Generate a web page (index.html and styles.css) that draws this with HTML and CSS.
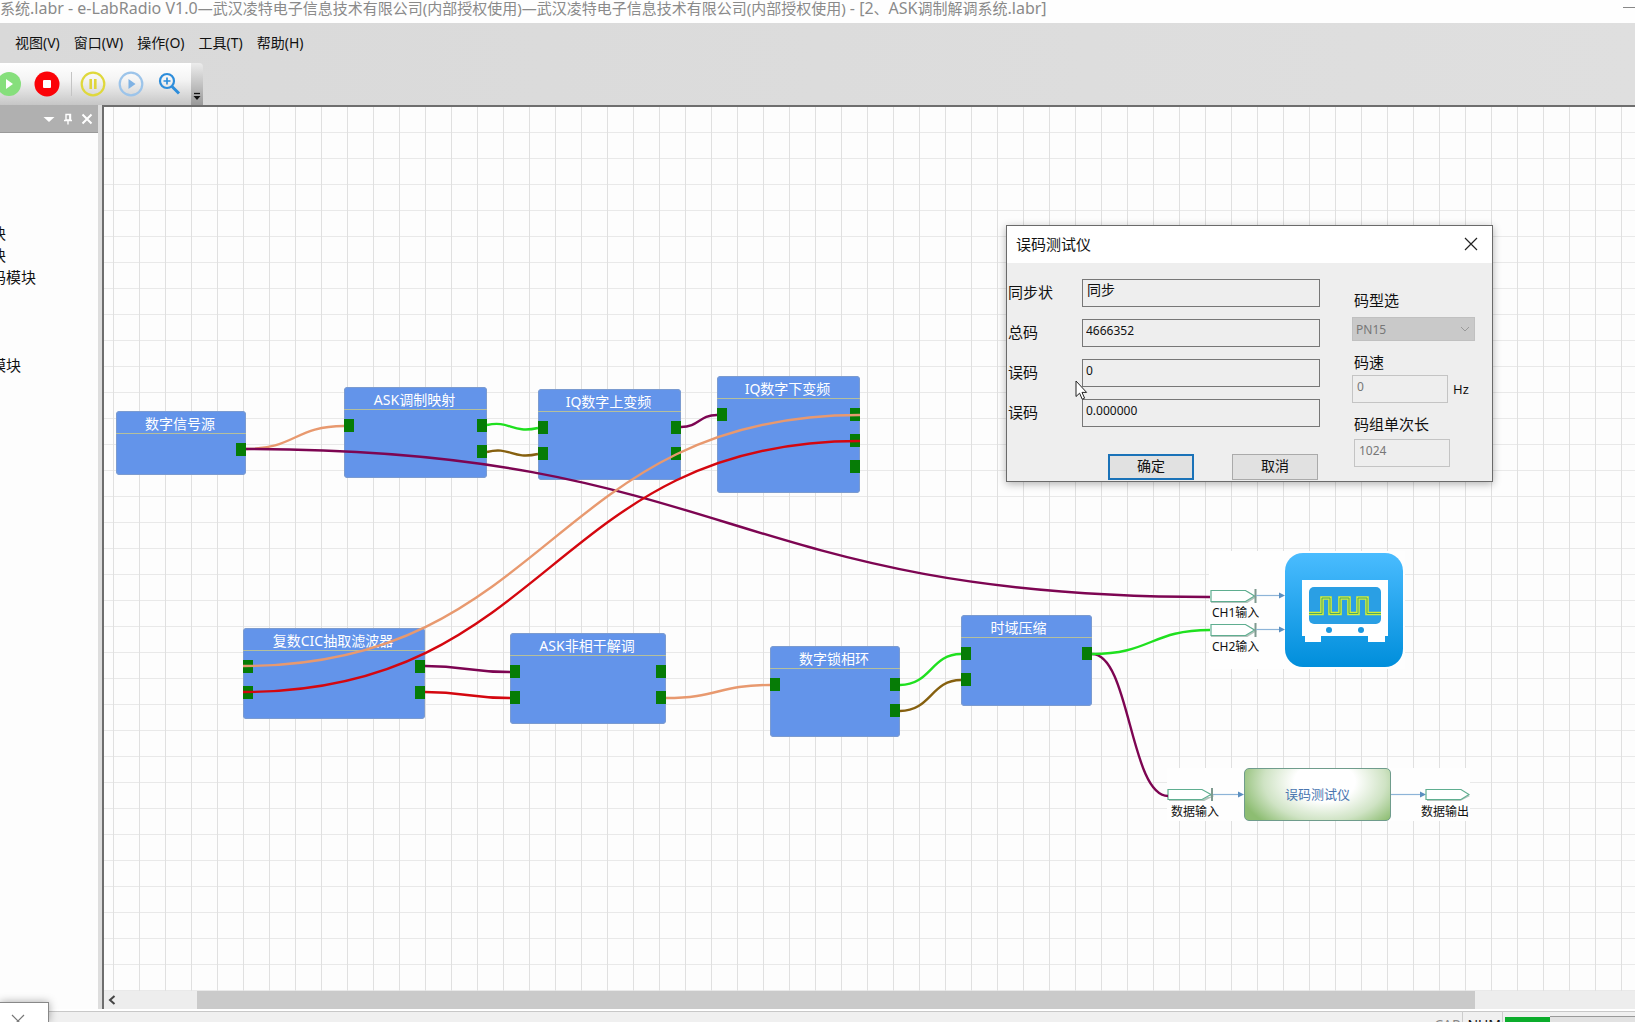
FILE: index.html
```html
<!DOCTYPE html>
<html lang="zh-CN">
<head>
<meta charset="utf-8">
<title>e-LabRadio V1.0</title>
<link rel="stylesheet" href="styles.css">
</head>
<body>
<div class="app">
  <header class="titlebar">
    <span class="titlebar-text">系统<b>.labr - e-LabRadio V1.0</b>—武汉凌特电子信息技术有限公司(内部授权使用)—武汉凌特电子信息技术有限公司(内部授权使用)<b> - [2</b>、<b>ASK</b>调制解调系统<b>.labr]</b></span>
    <button class="minimize" type="button" aria-label="最小化"></button>
  </header>

  <div class="ribbon">
    <nav class="menubar">
      <button type="button">视图(V)</button>
      <button type="button">窗口(W)</button>
      <button type="button">操作(O)</button>
      <button type="button">工具(T)</button>
      <button type="button">帮助(H)</button>
    </nav>
    <div class="toolbar">
      <div class="tools">
        <button type="button" aria-label="运行"><svg viewBox="0 0 26 26"><circle cx="13" cy="13" r="12" fill="#86df7c"/><path d="M10 8v10l7-5z" fill="#fff"/></svg></button>
        <button type="button" aria-label="停止"><svg viewBox="0 0 26 26"><circle cx="13" cy="13" r="12.5" fill="#fb0207"/><rect x="9" y="9" width="8" height="8" rx="1" fill="#fff"/></svg></button>
        <span class="tool-sep"></span>
        <button type="button" aria-label="暂停"><svg viewBox="0 0 26 26"><circle cx="13" cy="13" r="11.3" fill="none" stroke="#dfd83c" stroke-width="2.2"/><path d="M10.7 8v10M15.3 8v10" stroke="#e0d53c" stroke-width="2.6"/></svg></button>
        <button type="button" aria-label="单步"><svg viewBox="0 0 26 26"><circle cx="13" cy="13" r="11.3" fill="none" stroke="#9cc4ea" stroke-width="2.2"/><path d="M10.5 8v10l7-5z" fill="#7fb2e4"/></svg></button>
        <button type="button" aria-label="放大"><svg viewBox="0 0 26 26" fill="none" stroke="#2d8ddb"><circle cx="11" cy="10" r="7" stroke-width="2.2"/><path d="M11 6.500v7M7.500 10h7" stroke-width="1.700"/><path d="M16 15.500l7 7" stroke-width="3"/></svg></button>
      </div>
      <button class="overflow" type="button" aria-label="更多"><svg viewBox="0 0 8 9"><path d="M1 1.500h6" stroke="#111" stroke-width="1.300"/><path d="M0.500 4h7L4 8z" fill="#111"/></svg></button>
    </div>
  </div>

  <main class="workspace">
    <aside class="sidebar">
      <div class="panel-head">
        <button type="button" aria-label="菜单"><svg viewBox="0 0 12 12"><path d="M0.500 4h11L6 9z" fill="#fff"/></svg></button>
        <button type="button" aria-label="固定"><svg viewBox="0 0 12 12" fill="none" stroke="#fff" stroke-width="1.400"><path d="M4 1.500h4.500V7H4zM2 7.500h8M6 7.500v4M7.800 2v5"/></svg></button>
        <button type="button" aria-label="关闭"><svg viewBox="0 0 12 12"><path d="M1.500 1.500l9 9M10.500 1.500l-9 9" stroke="#fff" stroke-width="2"/></svg></button>
      </div>
      <ul class="tree">
        <li>块</li>
        <li>块</li>
        <li>码模块</li>
        <li class="tree-later">模块</li>
      </ul>
    </aside>

    <div class="stage">
      <section class="canvas">
        <article class="node n-source"><h2>数字信号源</h2><div class="ports"><div></div><div><i></i></div></div></article>
        <article class="node n-map"><h2>ASK调制映射</h2><div class="ports"><div><i></i></div><div><i></i><i></i></div></div></article>
        <article class="node n-up"><h2>IQ数字上变频</h2><div class="ports"><div><i></i><i></i></div><div><i></i><i></i></div></div></article>
        <article class="node n-down"><h2>IQ数字下变频</h2><div class="ports"><div><i></i></div><div><i></i><i></i><i></i></div></div></article>
        <article class="node n-cic"><h2>复数CIC抽取滤波器</h2><div class="ports"><div><i></i><i></i></div><div><i></i><i></i></div></div></article>
        <article class="node n-demod"><h2>ASK非相干解调</h2><div class="ports"><div><i></i><i></i></div><div><i></i><i></i></div></div></article>
        <article class="node n-pll"><h2>数字锁相环</h2><div class="ports"><div><i></i></div><div><i></i><i></i></div></div></article>
        <article class="node n-time"><h2>时域压缩</h2><div class="ports"><div><i></i><i></i></div><div><i></i></div></div></article>

        <div class="scope">
          <svg width="196" height="118" viewBox="1209 551 196 118">
            <defs>
              <linearGradient id="sky" x1="0" y1="0" x2="0" y2="1"><stop offset="0" stop-color="#4abcff"/><stop offset="1" stop-color="#008edb"/></linearGradient>
            </defs>
            <g stroke-width="1.200">
              <g id="tag1"><path d="M1212 592h35l8 5-8 5h-35z" fill="none" stroke="#b4c4bd" stroke-width="2"/><path d="M1211 590.500h34.500l9 5.500-9 5.500H1211z" fill="#fff" stroke="#5fae90"/><path d="M1255.500 589v14" stroke="#7f9a90" stroke-width="2"/><path d="M1256 595.500h24" stroke="#8db4d8"/><path d="M1279 592.500v6l6-3z" fill="#5b8fc0"/></g>
              <use href="#tag1" y="34"/>
            </g>
            <rect x="1285" y="553" width="118" height="114" rx="18" fill="url(#sky)"/>
            <path d="M1302 580h86v56h-3v6h-17v-6h-47v6h-16v-6h-3z" fill="#fff"/>
            <rect x="1309" y="587" width="72" height="37" rx="5" fill="#2a9fe4"/>
            <circle cx="1329" cy="630" r="3" fill="#1c97df"/><circle cx="1361" cy="630" r="3" fill="#1c97df"/>
            <g fill="none">
              <path d="M1309 613.500h13v-15.500h8v15.500h10v-15.500h9v15.500h9v-15.500h9v15.500h14" stroke="#d2ee38" stroke-width="3.600"/>
              <path d="M1309 613.500h13v-15.500h8v15.500h10v-15.500h9v15.500h9v-15.500h9v15.500h14" stroke="#4aa869"/>
            </g>
          </svg>
          <span class="pin-label ch1">CH1输入</span>
          <span class="pin-label ch2">CH2输入</span>
        </div>

        <div class="tester">
          <div class="pin">
            <svg width="77" height="18" viewBox="0 0 77 18"><path d="M3 7h34l8 4-8 4H3z" fill="none" stroke="#b4c4bd" stroke-width="2"/><path d="M1 4.500h34l9 5-9 5H1z" fill="#fff" stroke="#5fae90" stroke-width="1.200"/><path d="M45 3v13" stroke="#7f9a90" stroke-width="2"/><path d="M46 9.500h26" stroke="#8db4d8" stroke-width="1.200"/><path d="M71 6.500v6l6-3z" fill="#5b8fc0"/></svg>
            <span>数据输入</span>
          </div>
          <div class="tester-box">误码测试仪</div>
          <div class="pin out">
            <svg width="79" height="18" viewBox="0 0 79 18"><path d="M0 9.500h30" stroke="#8db4d8" stroke-width="1.200"/><path d="M29 6.500v6l6-3z" fill="#5b8fc0"/><path d="M37 7h32l8 4-8 4H37z" fill="none" stroke="#b4c4bd" stroke-width="2"/><path d="M35 4.500h35l8 5-8 5H35z" fill="#fff" stroke="#5fae90" stroke-width="1.200"/></svg>
            <span>数据输出</span>
          </div>
        </div>

        <svg class="wires" width="1531" height="884" viewBox="104 107 1531 884" fill="none" stroke-width="2.400">
          <path stroke="#e8996f" d="M246 449C295 449 295 426 344 426"/>
          <path stroke="#7d0552" d="M246 449C728 449 728 597 1210 597"/>
          <path stroke="#1fe01f" d="M487 425C510 420 512 434 538 428"/>
          <path stroke="#86600f" d="M487 452C510 446 512 460 538 454"/>
          <path stroke="#7d0552" d="M681 427C699 427 699 415 717 415"/>
          <path stroke="#e8996f" d="M860 415C551 415 551 666 243 666"/>
          <path stroke="#d4070f" d="M860 441C551 441 551 692 243 692"/>
          <path stroke="#7d0552" d="M425 666C467 666 467 672 510 672"/>
          <path stroke="#d4070f" d="M425 692C467 692 467 698 510 698"/>
          <path stroke="#e8996f" d="M666 698C718 698 718 685 770 685"/>
          <path stroke="#1fe01f" d="M900 685C931 685 931 654 961 654"/>
          <path stroke="#86600f" d="M900 711C931 711 931 680 961 680"/>
          <path stroke="#7d0552" d="M1092 654C1130 654 1130 796 1168 796"/>
          <path stroke="#1fe01f" d="M1092 654C1151 654 1151 630 1210 630"/>
        </svg>

        <form class="dialog" role="dialog" aria-labelledby="dlg-title">
          <div class="dialog-head">
            <span id="dlg-title">误码测试仪</span>
            <button type="button" aria-label="关闭"><svg viewBox="0 0 14 14"><path d="M1 1l12 12M13 1L1 13" stroke="#222" stroke-width="1.200"/></svg></button>
          </div>
          <div class="dialog-body">
            <div class="left">
              <div class="row"><label for="sync">同步状</label><input class="cjk" id="sync" value="同步" readonly></div>
              <div class="row"><label for="total">总码</label><input id="total" value="4666352" readonly></div>
              <div class="row"><label for="err">误码</label><input id="err" value="0" readonly></div>
              <div class="row"><label for="rate">误码</label><input id="rate" value="0.000000" readonly></div>
              <div class="actions"><button class="ok" type="button">确定</button><button type="button">取消</button></div>
            </div>
            <div class="right">
              <label for="type">码型选</label>
              <div class="select-wrap"><select id="type" disabled><option>PN15</option></select><svg viewBox="0 0 10 6"><path d="M1 1l4 4 4-4" fill="none" stroke="#999"/></svg></div>
              <label for="speed">码速</label>
              <div class="speed"><input id="speed" value="0" disabled><span>Hz</span></div>
              <label class="len" for="len">码组单次长</label>
              <input id="len" value="1024" disabled>
            </div>
          </div>
        </form>
        <svg class="cursor" width="14" height="20" viewBox="0 0 14 20"><path d="M1 1v15.500l3.600-3.300 2.600 6 2.400-1-2.600-5.800h4.600z" fill="#fff" stroke="#222"/></svg>
      </section>
      <div class="hscroll">
        <button type="button" aria-label="向左"><svg viewBox="0 0 8 10"><path d="M6.500 1L2 5l4.500 4" fill="none" stroke="#444" stroke-width="2"/></svg></button>
        <div class="thumb"></div>
      </div>
    </div>
  </main>

  <footer class="statusbar">
    <span class="cap">CAP</span><span class="num">NUM</span><span class="progress"></span><span class="rest"></span>
  </footer>
  <div class="popup"><svg viewBox="0 0 14 14"><path d="M1 1l12 12M13 1L1 13" stroke="#777" stroke-width="1.200"/></svg></div>
</div>
</body>
</html>
```
FILE: styles.css
```css
* { box-sizing: border-box; }

body {
  margin: 0;
  font: 14px/20px "Noto Sans", "Noto Sans CJK SC", sans-serif;
  color: #111;
}

button, input, select { font: inherit; color: inherit; margin: 0; padding: 0; border: 0; border-radius: 0; }
button { background: none; }
svg { display: block; }

.app {
  position: relative;
  display: flex;
  flex-direction: column;
  height: 100vh;
  overflow: hidden;
  background: #dedede;
}

/* title bar */
.titlebar {
  display: flex;
  justify-content: space-between;
  flex: none;
  height: 23px;
  overflow: hidden;
  background: #fefefe;
  color: #8a8a8a;
  font-size: 15px;
  line-height: 16px;
  white-space: nowrap;
}
.titlebar b { font-size: 16px; font-weight: 400; }
.minimize { width: 12px; height: 8px; border-bottom: 1px solid #888; }

/* menu and toolbar */
.ribbon {
  flex: none;
  height: 82px;
  background: linear-gradient(90deg, #d9d9d9, #dfdfdf);
}
.menubar { display: flex; gap: 14px; height: 40px; padding-left: 15px; }
.toolbar { display: flex; width: 203px; height: 42px; }
.tools {
  display: flex;
  align-items: center;
  flex: 1;
  gap: 12px;
  overflow: hidden;
  background: linear-gradient(#fff, #f4f4f4 40%, #c6c6c6);
}
.tools button { flex: none; width: 26px; height: 26px; }
.tools button:first-child { margin-left: -4px; }
.tool-sep { flex: none; width: 1px; height: 24px; background: #c4c4c4; margin: 0 -4px 0 -1px; }
.overflow {
  display: flex;
  align-items: flex-end;
  justify-content: center;
  width: 12px;
  padding-bottom: 4px;
  background: linear-gradient(#ececec, #9a9a9a);
  border-top-right-radius: 4px;
}
.overflow svg { width: 8px; height: 9px; }

/* workspace */
.workspace { display: flex; flex: 1; min-height: 0; }
.sidebar {
  flex: none;
  width: 98px;
  overflow: hidden;
  background: #fdfdfd;
}
.panel-head {
  display: flex;
  align-items: center;
  justify-content: flex-end;
  gap: 7px;
  height: 28px;
  padding-right: 5px;
  background: #b0b0b0;
  border-bottom: 1px solid #999;
}
.panel-head svg { width: 12px; height: 12px; }
.tree {
  list-style: none;
  margin: 89px 0 0 -9px;
  padding: 0;
  font-size: 15px;
  line-height: 22px;
}
.tree-later { margin-top: 66px; }

.stage {
  display: flex;
  flex-direction: column;
  flex: 1;
  min-width: 0;
  margin-left: 4px;
  border-top: 2px solid #6e6e6e;
  border-left: 2px solid #6e6e6e;
}
.canvas {
  position: relative;
  flex: 1;
  min-height: 0;
  overflow: hidden;
  background-color: #fdfdfd;
  background-image:
    linear-gradient(90deg, #e0e0e0 1px, transparent 1px),
    linear-gradient(#e9e9e9 1px, transparent 1px);
  background-size: 26px 26px;
  background-position: 9px 25px;
}
.wires { position: absolute; left: 0; top: 0; }

/* blocks */
.node {
  position: absolute;
  width: 143px;
  height: 91px;
  border-radius: 4px;
  background: #6394ea;
  box-shadow: inset 0 0 0 1px #7b9bd0;
  overflow: hidden;
}
.node h2 {
  height: 23px;
  margin: 0;
  padding-right: 2px;
  border-bottom: 1px solid #b5bf9c;
  color: #fff;
  font-size: 14px;
  font-weight: 400;
  line-height: 25px;
  text-align: center;
  white-space: nowrap;
}
.ports { display: flex; justify-content: space-between; padding-top: 9px; }
.ports div { display: flex; flex-direction: column; gap: 13px; }
.ports i { width: 10px; height: 13px; background: #067c06; }

.n-source { left: 12px; top: 304px; width: 130px; height: 64px; }
.n-map { left: 240px; top: 280px; }
.n-up { left: 434px; top: 282px; }
.n-down { left: 613px; top: 269px; height: 117px; }
.n-cic { left: 139px; top: 521px; width: 182px; }
.n-demod { left: 406px; top: 526px; width: 156px; }
.n-pll { left: 666px; top: 539px; width: 130px; }
.n-time { left: 857px; top: 508px; width: 131px; }
.n-time h2 { padding-right: 16px; }

/* oscilloscope */
.scope { position: absolute; left: 1105px; top: 444px; background: #fefefe; }
.pin-label { position: absolute; left: 3px; font-size: 12px; line-height: 16px; }
.ch1 { top: 54px; }
.ch2 { top: 88px; }

/* error tester block */
.tester {
  position: absolute;
  left: 1063px;
  top: 661px;
  display: flex;
  background: #fefefe;
}
.pin { padding-top: 17px; font-size: 12px; line-height: 18px; }
.pin span { display: block; padding-left: 4px; }
.pin.out span { padding-left: 30px; }
.tester-box {
  width: 147px;
  height: 53px;
  border: 1px solid #6f9c8c;
  border-radius: 5px;
  background: radial-gradient(ellipse 60% 110% at 55% 25%, #fff 35%, #cfe3c4 70%, #8dbd72 100%);
  color: #4a76b0;
  font-size: 13px;
  line-height: 51px;
  text-align: center;
}

/* dialog */
.dialog {
  position: absolute;
  left: 902px;
  top: 118px;
  width: 487px;
  border: 1px solid #6a6a6a;
  background: #eee;
  box-shadow: 0 2px 8px rgba(0, 0, 0, .3);
  font-size: 15px;
}
.dialog-head {
  display: flex;
  align-items: center;
  justify-content: space-between;
  height: 37px;
  padding: 0 14px 2px 9px;
  background: #fff;
}
.dialog-head svg { width: 14px; height: 14px; }
.dialog-body { display: flex; justify-content: space-between; height: 218px; padding: 16px 0 0 1px; }
.left { display: flex; flex-direction: column; gap: 12px; }
.row { display: flex; align-items: center; }
.row label { width: 74px; padding-bottom: 2px; }
.row input {
  width: 238px;
  height: 28px;
  padding: 0 3px 6px;
  border: 1px solid #777;
  background: transparent;
  font-size: 12px;
}
.row input.cjk { padding: 0 4px 8px; font-size: 14px; }
.actions { display: flex; gap: 38px; padding: 15px 0 0 100px; }
.actions button {
  width: 86px;
  height: 26px;
  padding-bottom: 2px;
  border: 1px solid #aaa;
  background: #e1e1e1;
  font-size: 14px;
}
.actions .ok { border: 2px solid #1a72b8; }
.right { width: 140px; padding-top: 10px; color: #111; }
.right label { display: block; padding-left: 2px; line-height: 22px; }
.right input {
  display: block;
  width: 96px;
  height: 28px;
  padding: 0 4px 6px;
  border: 1px solid #c4c4c4;
  background: transparent;
  color: #777;
  font-size: 12px;
}
.right #len { margin-left: 2px; }
.select-wrap { position: relative; width: 123px; margin: 6px 0 10px; }
.select-wrap select {
  display: block;
  appearance: none;
  width: 123px;
  height: 24px;
  padding: 2px 0 0 3px;
  border: 1px solid #c0c0c0;
  background: #c9c9c9;
  color: #777;
  font-size: 12px;
  opacity: 1;
}
.select-wrap svg { position: absolute; right: 5px; top: 9px; width: 10px; height: 6px; }
.speed { display: flex; align-items: center; gap: 5px; margin: 2px 0 10px; font-size: 13px; }
.right .len { margin-bottom: 4px; }

.cursor { position: absolute; left: 971px; top: 273px; }

/* scroll bar */
.hscroll { display: flex; flex: none; height: 18px; background: #ededed; }
.hscroll button { flex: none; width: 16px; margin-right: 77px; padding-left: 4px; }
.hscroll svg { width: 8px; height: 10px; }
.thumb { flex: 1; margin-right: 160px; background: #cacaca; }

/* status bar */
.statusbar {
  display: flex;
  justify-content: flex-end;
  flex: none;
  height: 13px;
  overflow: hidden;
  border-top: 2px solid #fff;
  background: #f0f0f0;
  box-shadow: inset 0 1px #c8c8c8;
  line-height: 20px;
}
.statusbar .cap, .statusbar .num { height: 22px; padding-top: 4px; border-right: 1px solid #ccc; }
.cap { padding-right: 2px; color: #888; }
.num { padding: 0 1px 0 4px; margin-right: 2px; }
.progress { width: 45px; margin-top: 6px; background: #0cad2c; }
.rest { width: 85px; margin-top: 5px; border-top: 1px solid #999; background: #e2e2e2; }

.popup {
  position: absolute;
  left: 0;
  bottom: 0;
  width: 49px;
  height: 20px;
  padding: 11px 0 0 11px;
  overflow: hidden;
  border: 1px solid #888;
  border-width: 1px 1px 0 0;
  background: #fff;
  box-shadow: 0 0 8px rgba(0, 0, 0, .35);
}
.popup svg { width: 14px; height: 14px; }
```
